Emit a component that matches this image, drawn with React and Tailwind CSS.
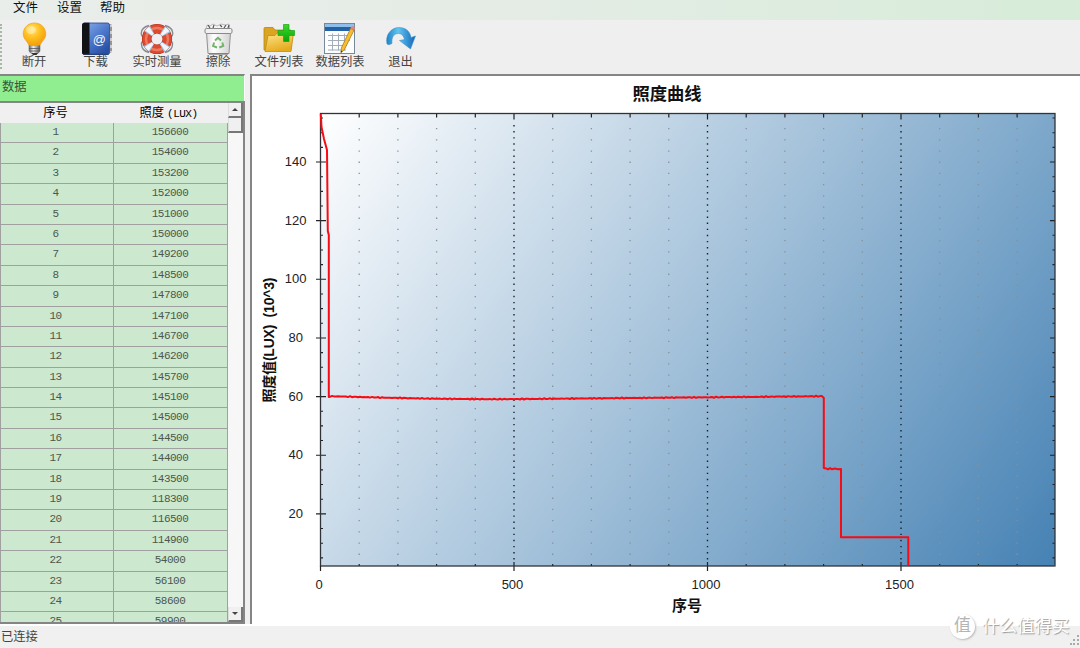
import React from "react";

const LUX = [156600, 154600, 153200, 152000, 151000, 150000, 149200, 148500, 147800, 147100, 146700, 146200, 145700, 145100, 145000, 144500, 144000, 143500, 118300, 116500, 114900, 54000, 56100, 58600, 59900];

function Bulb() {
  return (
    <svg width="34" height="34" viewBox="0 0 34 34">
      <defs>
        <radialGradient id="bulb" cx="0.4" cy="0.3" r="0.75">
          <stop offset="0" stopColor="#ffe880" />
          <stop offset="0.45" stopColor="#ffc020" />
          <stop offset="1" stopColor="#f09a08" />
        </radialGradient>
        <linearGradient id="cap"><stop offset="0" stopColor="#666" /><stop offset="0.4" stopColor="#eee" /><stop offset="1" stopColor="#555" /></linearGradient>
      </defs>
      <path d="M12 23h11v6q-1 3-5.500 3t-5.500-3z" fill="url(#cap)" stroke="#777" strokeWidth="0.600" />
      <path d="M12 26.500h11M12.500 29h10" stroke="#555" strokeWidth="0.800" />
      <path d="M14.500 31h6.500l-1.500 2h-3.500z" fill="#333" />
      <path d="M17.500 1C11 1 6.200 5.800 6.200 12c0 5 4 7 5.500 10.800q6 2 11.600 0c1.500-3.800 5.500-5.800 5.500-10.800C28.800 5.800 24 1 17.500 1z" fill="url(#bulb)" stroke="#eea420" strokeWidth="0.700" />
      <ellipse cx="14" cy="8" rx="5" ry="4" fill="#fff" opacity="0.300" />
    </svg>
  );
}

function Book() {
  return (
    <svg width="34" height="34" viewBox="0 0 34 34">
      <defs><linearGradient id="book" x2="0.700" y2="1"><stop offset="0" stopColor="#87aeed" /><stop offset="0.550" stopColor="#4c78cb" /><stop offset="1" stopColor="#2850a4" /></linearGradient></defs>
      <rect x="29" y="2.500" width="3" height="28" fill="#e9e9ea" stroke="#888" strokeWidth="0.600" />
      <path d="M32 5v4M32 12v4M32 19v4M32 26v3" stroke="#777" strokeWidth="1.300" />
      <rect x="3.500" y="1" width="27" height="31.500" rx="2" fill="url(#book)" stroke="#24458d" strokeWidth="0.800" />
      <path d="M5 .7h5.500v32H5q-2-.3-2-2V3q.2-2 2-2.300z" fill="#101216" />
      <path d="M4.500 32.300h25" stroke="#263c70" />
      <text x="20.300" y="21.500" textAnchor="middle" fontFamily="Liberation Sans, sans-serif" fontSize="13" fill="#f3f7ff">@</text>
    </svg>
  );
}

function Lifebuoy() {
  return (
    <svg width="34" height="34" viewBox="0 0 34 34">
      <path d="M9 3.500Q0 6 1.500 13L4 17 1.500 21Q1 28.500 9 30.500M25 3.500q9 2.500 7.500 9.500L30 17l2.500 4Q33 28.500 25 30.500" fill="none" stroke="#848c90" strokeWidth="1.400" />
      <circle cx="17" cy="17" r="10.300" fill="none" stroke="#b5331f" strokeWidth="9.600" />
      <circle cx="17" cy="17" r="10.300" fill="none" stroke="#dd4a30" strokeWidth="8.400" />
      <circle cx="17" cy="17" r="11" fill="none" stroke="#ee7a5e" strokeWidth="2.400" />
      <circle cx="17" cy="17" r="10.300" fill="none" stroke="#9cc3e2" strokeWidth="9.400" strokeDasharray="5.600 10.580" strokeDashoffset="-5.290" />
      <circle cx="17" cy="17" r="10.300" fill="none" stroke="#f2f6fa" strokeWidth="8.600" strokeDasharray="3.800 12.380" strokeDashoffset="-6.190" />
    </svg>
  );
}

function Bin() {
  return (
    <svg width="34" height="34" viewBox="0 0 34 34">
      <defs><linearGradient id="bin"><stop offset="0" stopColor="#dcdcdc" /><stop offset="0.300" stopColor="#fff" /><stop offset="1" stopColor="#d2d2d2" /></linearGradient></defs>
      <path d="M5 9l1-6 3 1 3-2 4 2 4-2 4 1 4-1 1 7z" fill="#f5f5f5" stroke="#aaa" strokeWidth="0.800" />
      <path d="M7 3l2 3M13 3l-1 3M19 3l2 2M25 3l-2 3M28 3l-1 3" stroke="#555" strokeWidth="1.200" />
      <path d="M5.500 10.500h24L28 31.500H7z" fill="url(#bin)" stroke="#929292" />
      <rect x="4" y="6.500" width="27" height="5" rx="1.500" fill="#f0f0f0" stroke="#8a8a8a" />
      <g fill="none" stroke="#72b26b" strokeWidth="1.900"><path d="M14 18.500l3-2.800 3 2.800M21.300 20.500l1 3.500-4 1.500M16 25.500l-4-1.500 1.200-3.500" /></g>
      <path d="M8 32h19" stroke="#777" strokeWidth="1.200" />
    </svg>
  );
}

function FolderAdd() {
  return (
    <svg width="34" height="34" viewBox="0 0 34 34">
      <defs>
        <linearGradient id="folder" x2="0.400" y2="1"><stop offset="0" stopColor="#fee58c" /><stop offset="1" stopColor="#e6ac20" /></linearGradient>
        <linearGradient id="plus" x2="0" y2="1"><stop offset="0" stopColor="#40d82c" /><stop offset="1" stopColor="#08a50b" /></linearGradient>
      </defs>
      <path d="M2 28V6.500q0-1 1-1h8l2 2.500h16v20z" fill="#dba521" stroke="#b8860e" strokeWidth="0.800" />
      <path d="M6 13.500h7l2-2.500h16.500l-2.500 18.500H3z" fill="url(#folder)" stroke="#c28d12" strokeWidth="0.800" />
      <path d="M21.500 2.500h5.500v6h5.500v5H27v6h-5.500v-6H16v-5h5.500z" fill="url(#plus)" stroke="#18a618" strokeWidth="0.700" />
    </svg>
  );
}

function TableEdit() {
  return (
    <svg width="34" height="34" viewBox="0 0 34 34">
      <rect x="1.500" y="1.500" width="30" height="30" fill="#fbfdfe" stroke="#778997" />
      <path d="M2 2h29v4.500H2z" fill="#8fc0ea" />
      <path d="M2 5h29v4H2z" fill="#2563a8" />
      <path d="M5 13.500h22M5 18.500h22M5 23.500h19M9.500 11.500v17M15.500 11.500v17M21.500 11.500v17M5 28h18" stroke="#a2adb7" />
      <path d="M27.500 6.500l3.600 1.600L21.500 27.500l-3.500 3 .3-4.500z" fill="#f6bd2c" stroke="#9d7423" strokeWidth="0.700" />
      <path d="M28 5q1.500-2 4 1l-1 2.200-3.500-1.700z" fill="#e68086" />
      <path d="M18 28.500l1.600 1-1.900 1.600z" fill="#333" />
    </svg>
  );
}

function ExitArrow() {
  return (
    <svg width="34" height="34" viewBox="0 0 34 34">
      <defs><linearGradient id="arrow"><stop offset="0" stopColor="#2182c6" /><stop offset="0.400" stopColor="#60c6f0" /><stop offset="1" stopColor="#1265b8" /></linearGradient></defs>
      <path d="M3 22C1 13 7 5.500 15 5.500c7 0 11 4 12 10l4.500-1.500-5 13-11-8.500 5-1c-1-4-3-6-6-6-5 0-7 4-6.500 10q-3 2-5 .5z" fill="url(#arrow)" stroke="#318ac5" strokeWidth="0.500" />
    </svg>
  );
}

const TOOLS = [
  { label: "断开", Icon: Bulb, width: "w-[62px]" },
  { label: "下载", Icon: Book, width: "w-[61px]" },
  { label: "实时测量", Icon: Lifebuoy, width: "w-[62px]" },
  { label: "擦除", Icon: Bin, width: "w-[60px]" },
  { label: "文件列表", Icon: FolderAdd, width: "w-[62px]" },
  { label: "数据列表", Icon: TableEdit, width: "w-[60px]" },
  { label: "退出", Icon: ExitArrow, width: "w-[61px]" },
];

function Toolbar() {
  return (
    <div className="flex h-[54px] shrink-0 bg-[#efefef]">
      <div className="mt-[4px] h-[45px] w-[3px] shrink-0 border-l-2 border-dotted border-[#a5b9a5]" />
      {TOOLS.map(({ label, Icon, width }) => (
        <div key={label} className={`flex shrink-0 flex-col items-center pt-[2px] ${width}`}>
          <Icon />
          <span className="-mt-[2px] text-[12.300px] leading-[16px] whitespace-nowrap text-[#444]">{label}</span>
        </div>
      ))}
    </div>
  );
}

function ScrollButton({ up }) {
  return (
    <div className="flex h-[15px] shrink-0 items-center justify-center border-r-2 border-b-2 border-l border-r-[#777] border-b-[#777] border-l-[#ddd] bg-[#f0f0f0]">
      <svg width="6" height="3" viewBox="0 0 6 3"><path d={up ? "M0 3L3 0l3 3z" : "M0 0h6L3 3z"} fill="#444" /></svg>
    </div>
  );
}

function DataPanel() {
  return (
    <div className="flex w-[246px] shrink-0 flex-col">
      <div className="flex h-[27px] w-[245px] shrink-0 items-center border-t-2 border-r border-t-[#858585] border-r-white bg-[#90ee90] pb-[2px] pl-[2px] text-[12.300px] text-[#35563a]">数据</div>
      <div className="flex h-[523px] w-[245px] border-t-2 border-r-2 border-b-2 border-[#858585]">
        <div className="w-[228px] shrink-0 overflow-hidden">
          <div className="flex h-[20px] items-center bg-[#f0f0f0] text-center text-[12.300px] text-black">
            <div className="w-[111px]">序号</div>
            <div className="w-[117px] pr-[2px]">照度<span className="ml-[3px] font-['Liberation_Mono'] text-[11px] tracking-[-0.500px]">(LUX)</span></div>
          </div>
          {LUX.map((value, i) => (
            <div key={i} className="flex h-[20.400px] border-b border-[#a0a0a0] bg-[#cce8cf] text-center font-['Liberation_Mono'] text-[11px] leading-[19px] tracking-[-0.500px] text-[#4c574d]">
              <div className="w-[114px] border-r border-l border-[#a0a0a0] pr-[3px]">{i + 1}</div>
              <div className="w-[114px] border-r border-[#a0a0a0] pr-[1px]">{value}</div>
            </div>
          ))}
        </div>
        <div className="flex min-w-0 flex-1 flex-col bg-[#f7f7f7]">
          <ScrollButton up />
          <div className="h-[15px] border-r-2 border-b-2 border-l border-r-[#777] border-b-[#777] border-l-[#ddd] bg-[#f0f0f0]" />
          <div className="flex-1" />
          <ScrollButton />
        </div>
      </div>
    </div>
  );
}

const LEFT = 320.500, RIGHT = 1055, TOP = 113.500, BOTTOM = 566;
const xAt = (v) => LEFT + v * 0.3870;
const yAt = (v) => 572.500 - v * 2.932;

function curve() {
  const pts = [[320.800, 114], [321.500, 127], [324, 139], [327, 150], [327.800, 231], [328.800, 235], [328.800, 397]];
  for (let x = 330; x <= 822; x += 2) {
    const t = (x - 330) / 492;
    const dip = t < 0.35 ? Math.sin((Math.PI / 2) * (t / 0.35)) * 3 : 3 * (1 - (t - 0.35) / 0.65);
    pts.push([x, 396.200 + dip + 0.600 * Math.sin(x * 1.700) * Math.sin(x * 0.310)]);
  }
  pts.push([823.800, 398], [823.800, 468]);
  for (let x = 826; x < 840; x += 2) pts.push([x, 468.800 + 0.600 * Math.sin(x * 1.300)]);
  pts.push([841, 469], [841, 537.300], [908.300, 537.300], [908.300, 565.500]);
  return pts.map((p) => p.map((n) => n.toFixed(1)).join(",")).join(" ");
}

function Chart() {
  const xs = Array.from({ length: 18 }, (_, i) => (i + 1) * 100);
  const ys = Array.from({ length: 31 }, (_, i) => (i + 1) * 5);
  return (
    <svg width="828" height="548" viewBox="252 76 828 548" className="block" fontFamily="'Liberation Sans', 'Noto Sans CJK SC', sans-serif">
      <defs>
        <linearGradient id="plot" gradientUnits="userSpaceOnUse" x1="320.500" y1="113.500" x2="1026.500" y2="606">
          <stop offset="0" stopColor="#ffffff" />
          <stop offset="1" stopColor="#4682b4" />
        </linearGradient>
      </defs>
      <rect x={LEFT} y={TOP} width={RIGHT - LEFT} height={BOTTOM - TOP} fill="url(#plot)" />
      {xs.map((v) => {
        const x = xAt(v), major = v % 500 === 0;
        return (
          <g key={v}>
            <line x1={x} x2={x} y1={major ? 125 : 128} y2={BOTTOM - 5} stroke={major ? "#17222c" : "#84929b"} strokeWidth={major ? 1.400 : 1.300} strokeDasharray={major ? "1.400 4.700" : "1.300 9.900"} />
            <path d={major ? `M${x} ${TOP}v6M${x} ${BOTTOM - 4}v9` : `M${x} ${TOP}v4M${x} ${BOTTOM}v-2`} stroke="#222" strokeWidth="1.200" />
          </g>
        );
      })}
      {ys.map((v) => {
        const y = yAt(v), major = v % 20 === 0;
        return <path key={v} d={major ? `M316 ${y}h10M${RIGHT} ${y}h-5` : `M${LEFT} ${y}h2.500M${RIGHT} ${y}h-2.500`} stroke="#222" strokeWidth="1.100" />;
      })}
      <rect x={LEFT} y={TOP} width={RIGHT - LEFT} height={BOTTOM - TOP} fill="none" stroke="#303438" strokeWidth="1.300" />
      <path d={`M${LEFT} ${BOTTOM}v5`} stroke="#222" strokeWidth="1.200" />
      <polyline points={curve()} fill="none" stroke="#f80b12" strokeWidth="2" strokeLinejoin="round" />
      <line x1="908" x2={RIGHT} y1="565.500" y2="565.500" stroke="#8b2840" strokeWidth="1.200" />
      <g fontSize="13" fill="#222">
        {[20, 40, 60, 80, 100, 120, 140].map((v) => <text key={v} x={v < 100 ? 303 : 306.500} y={yAt(v) + 4} textAnchor="end">{v}</text>)}
        {[0, 500, 1000, 1500].map((v) => <text key={v} x={xAt(v) - 1.500} y="588.500" textAnchor="middle">{v}</text>)}
      </g>
      <g fontWeight="bold" fill="#111" textAnchor="middle">
        <text x="667" y="99.500" fontSize="17.300">照度曲线</text>
        <text x="687" y="611" fontSize="15">序号</text>
        <text transform="translate(273.500 340) rotate(-90)" fontSize="14" textLength="125" xmlSpace="preserve">照度值(LUX)&#160; (10^3)</text>
      </g>
    </svg>
  );
}

export default function App() {
  return (
    <div className="relative flex h-[648px] w-[1080px] flex-col overflow-hidden bg-[#f0f0f0] font-['Liberation_Sans','Noto_Sans_CJK_SC',sans-serif]">
      <div className="flex h-[20px] shrink-0 items-start bg-linear-to-r from-[#eaeeea] via-[#e4ece5] to-[#d7ecd9] text-[12.500px] leading-[16px] text-[#111]">
        <span className="ml-[13px] w-[44px]">文件</span>
        <span className="w-[43px]">设置</span>
        <span>帮助</span>
      </div>
      <Toolbar />
      <div className="flex h-[550px] shrink-0">
        <DataPanel />
        <div className="ml-[4px] w-[830px] overflow-hidden border-t-2 border-l-2 border-[#858585] bg-white">
          <Chart />
        </div>
      </div>
      <div className="flex h-[24px] shrink-0 items-center border-t-2 border-white pl-[1px] text-[12.300px] text-[#444]">已连接</div>
      <div className="absolute top-[613px] left-[950px] flex items-center gap-[7px] text-[17.500px] text-white [text-shadow:1px_1px_1px_#999]">
        <span className="flex h-[25px] w-[25px] items-center justify-center rounded-full bg-white text-[17px] text-[#b4b4b4] shadow-[1px_1px_2px_#bbb] [text-shadow:none]">值</span>
        <span>什么值得买</span>
      </div>
      <svg className="absolute right-0 bottom-[1px]" width="10" height="12" viewBox="0 0 10 12" fill="#aaa">
        <path d="M7 0h2v2H7zM3 4h2v2H3zM7 4h2v2H7zM0 8h2v2H0zM3 8h2v2H3zM7 8h2v2H7z" />
      </svg>
    </div>
  );
}
